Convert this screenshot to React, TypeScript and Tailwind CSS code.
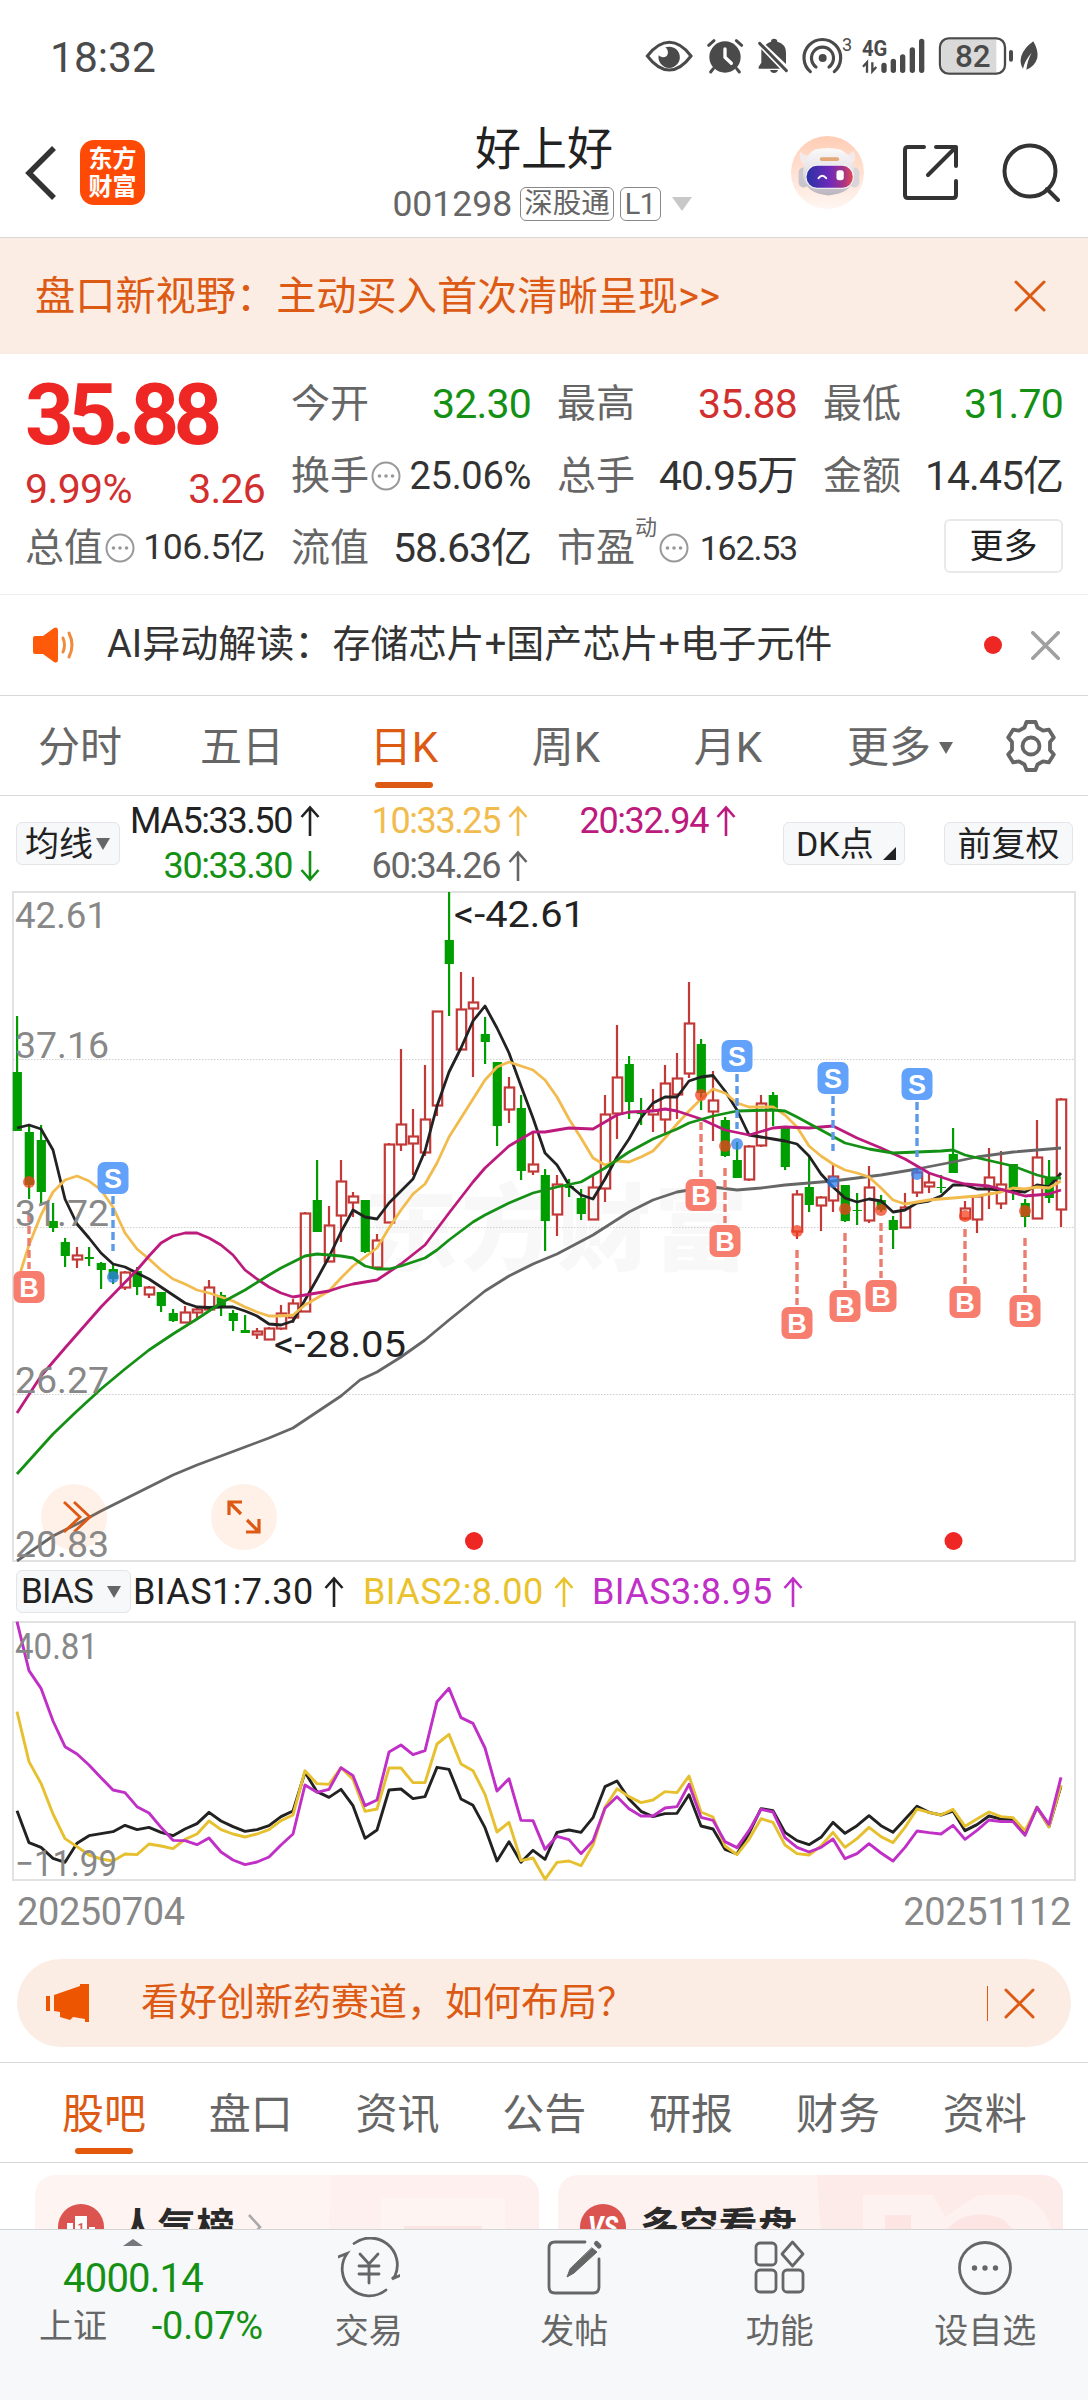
import React, { useState } from 'react';

type Candle = [high: number, top: number, bottom: number, low: number, up: 0 | 1];

const FIRST_X = 17;
const STEP = 12;

const CANDLES: Candle[] = [
  [1016, 1072, 1131, 1131, 0], [1125, 1132, 1185, 1199, 0], [1125, 1140, 1192, 1204, 0], [1203, 1221, 1228, 1232, 0],
  [1238, 1242, 1256, 1267, 0], [1247, 1255, 1259, 1268, 1], [1247, 1257, 1259, 1266, 0], [1262, 1263, 1270, 1289, 0],
  [1265, 1269, 1279, 1284, 0], [1271, 1272, 1287, 1290, 1], [1267, 1271, 1287, 1295, 0], [1286, 1287, 1294, 1298, 1],
  [1292, 1292, 1306, 1312, 0], [1309, 1313, 1321, 1322, 0], [1306, 1312, 1322, 1322, 1], [1308, 1309, 1312, 1319, 1],
  [1280, 1287, 1309, 1310, 1], [1292, 1295, 1306, 1316, 0], [1310, 1313, 1321, 1331, 0], [1315, 1330, 1333, 1333, 0],
  [1328, 1331, 1334, 1339, 1], [1327, 1328, 1339, 1339, 1], [1305, 1313, 1328, 1330, 1], [1299, 1303, 1317, 1323, 1],
  [1212, 1213, 1311, 1311, 1], [1160, 1200, 1232, 1232, 0], [1206, 1225, 1261, 1262, 1], [1160, 1181, 1215, 1242, 1],
  [1192, 1196, 1202, 1217, 1], [1200, 1200, 1252, 1253, 0], [1234, 1240, 1267, 1267, 1], [1143, 1144, 1222, 1222, 1],
  [1049, 1124, 1144, 1151, 1], [1109, 1136, 1143, 1175, 1], [1065, 1119, 1152, 1156, 1], [1011, 1011, 1105, 1116, 1],
  [892, 940, 964, 1016, 0], [972, 1009, 1049, 1049, 1], [977, 1002, 1008, 1077, 1], [1017, 1034, 1042, 1064, 0],
  [1062, 1062, 1126, 1146, 0], [1077, 1087, 1109, 1123, 1], [1095, 1108, 1171, 1180, 0], [1132, 1164, 1171, 1175, 1],
  [1169, 1175, 1221, 1251, 0], [1175, 1184, 1214, 1236, 1], [1179, 1186, 1188, 1197, 0], [1189, 1198, 1214, 1220, 0],
  [1174, 1187, 1219, 1219, 1], [1095, 1114, 1188, 1202, 1], [1025, 1077, 1113, 1139, 1], [1056, 1064, 1102, 1119, 0],
  [1098, 1112, 1114, 1125, 0], [1089, 1110, 1114, 1132, 1], [1065, 1083, 1119, 1133, 1], [1053, 1078, 1094, 1119, 1],
  [982, 1023, 1073, 1078, 1], [1039, 1044, 1093, 1110, 0], [1071, 1100, 1111, 1141, 1], [1117, 1120, 1156, 1157, 0],
  [1142, 1160, 1178, 1178, 0], [1145, 1146, 1179, 1181, 1], [1095, 1103, 1145, 1147, 1], [1092, 1095, 1110, 1126, 0],
  [1127, 1128, 1167, 1170, 0], [1190, 1194, 1231, 1239, 1], [1155, 1187, 1205, 1212, 0], [1196, 1197, 1205, 1231, 1],
  [1164, 1176, 1200, 1212, 1], [1185, 1185, 1221, 1222, 0], [1193, 1210, 1211, 1225, 0], [1166, 1187, 1220, 1223, 1],
  [1195, 1200, 1210, 1212, 0], [1216, 1220, 1230, 1249, 0], [1193, 1207, 1227, 1227, 1], [1169, 1172, 1192, 1197, 1],
  [1173, 1182, 1186, 1193, 1], [1175, 1187, 1188, 1193, 0], [1128, 1154, 1173, 1173, 0], [1201, 1208, 1218, 1220, 1],
  [1195, 1196, 1219, 1233, 1], [1148, 1177, 1188, 1209, 1], [1151, 1184, 1203, 1209, 1], [1164, 1164, 1188, 1200, 0],
  [1199, 1203, 1217, 1227, 0], [1120, 1157, 1218, 1218, 1], [1160, 1178, 1198, 1203, 0], [1098, 1099, 1209, 1227, 1],
];

const MA_LINES = [
  {
    color: '#666666',
    points: '17,1561 53,1536 77,1524 101,1511 125,1499 149,1487 173,1475 197,1465 221,1456 245,1447 269,1438 293,1428 317,1412 341,1396 360,1380 377,1372 401,1357 425,1340 449,1320 485,1291 509,1276 533,1264 557,1254 593,1235 629,1212 653,1200 677,1192 701,1188 713,1187 737,1190 761,1188 785,1185 833,1181 881,1175 917,1169 953,1162 977,1157 1013,1152 1061,1148',
  },
  {
    color: '#222222',
    points: '17,1128 29,1125 41,1129 53,1150 65,1199 77,1224 89,1238 101,1253 113,1264 125,1267 137,1273 149,1279 161,1287 173,1295 185,1303 197,1307 209,1307.5 221,1307 233,1307 245,1311 257,1316 269,1324 281,1325 293,1321 305,1300 317,1279 329,1257 341,1232 353,1210 365,1217 377,1219 389,1203 401,1191 413,1179 425,1151 437,1106 449,1072 461,1048 473,1021 485,1006 497,1028 509,1053 521,1086 533,1118 545,1153 557,1165 569,1185 581,1195 593,1199 605,1179 617,1157 629,1139 641,1118 653,1103 665,1097 677,1097 689,1081 701,1077 713,1075.5 725,1091 737,1110 749,1135 761,1137 773,1139 785,1141 797,1144 809,1156 821,1174 833,1187 845,1198 857,1202 869,1199 881,1201 893,1212 905,1210 917,1203 929,1201 941,1196 953,1185 965,1185 977,1189 989,1189 1001,1190 1013,1191 1025,1192 1037,1185 1049,1187 1061,1173',
  },
  {
    color: '#f2bb4d',
    points: '17,1283 29,1245 41,1215 53,1192 65,1180 77,1176 89,1181 101,1190 113,1207 125,1233 137,1249 149,1259 161,1270 173,1279 185,1284 197,1290 209,1293 221,1297 233,1301 245,1307 257,1312 269,1316 281,1316 293,1315 305,1305 317,1298 329,1291 341,1278 353,1266 365,1257 377,1248 389,1228 401,1210 413,1194 425,1184 437,1163 449,1137 461,1118 473,1099 485,1080 497,1067 509,1062 521,1066 533,1070 545,1080 557,1097 569,1119 581,1138 593,1158 605,1165 617,1161 629,1162 641,1157 653,1151 665,1138 677,1124 689,1111 701,1099 713,1089 725,1093 737,1103 749,1107 761,1107 773,1107 785,1115 797,1127 809,1146 821,1156 833,1164 845,1170 857,1173 869,1177 881,1188 893,1200 905,1204 917,1202 929,1200 941,1199 953,1198 965,1197 977,1196 989,1194 1001,1192 1013,1188 1025,1189 1037,1187 1049,1188 1061,1181',
  },
  {
    color: '#bd1a7d',
    points: '17,1413 41,1376 65,1348 101,1307 137,1270 149,1256 161,1243 173,1236 185,1233 197,1233 209,1238 221,1245 233,1255 245,1270 257,1279 269,1287 281,1293 293,1297 305,1295 329,1291 341,1287 353,1284 365,1282 377,1280 401,1264 425,1245 449,1213 473,1182 485,1168 497,1157 509,1146 521,1139 533,1132 545,1132 569,1128 593,1129 605,1122 617,1115 629,1112 653,1111 665,1109 677,1111 701,1119 725,1130 749,1135 773,1128 785,1127 809,1128 833,1126 857,1138 881,1148 905,1159 929,1173 953,1181 965,1184 989,1186 1025,1196 1049,1194 1061,1190',
  },
  {
    color: '#149114',
    points: '17,1474 53,1434 77,1411 101,1389 125,1369 149,1350 173,1334 197,1319 221,1303 245,1290 269,1275 281,1268 293,1262 305,1256 317,1254 341,1256 353,1258 365,1266 377,1269 389,1269 401,1266 425,1258 437,1250 449,1240 473,1222 485,1215 509,1203 533,1193 557,1187 581,1182 593,1175 605,1168 629,1152 653,1139 677,1129 689,1123 713,1116 737,1111 773,1110 785,1111 797,1117 821,1130 845,1143 869,1149 893,1153 917,1152 941,1151 953,1150 965,1155 1013,1166 1037,1175 1049,1178 1061,1178',
  },
];

const TRADES = [
  { side: 'B', x: 29, tag: 1271, dot: 1182 },
  { side: 'S', x: 113, tag: 1162, dot: 1277 },
  { side: 'B', x: 701, tag: 1179, dot: 1095 },
  { side: 'B', x: 725, tag: 1225, dot: 1146 },
  { side: 'S', x: 737, tag: 1040, dot: 1144 },
  { side: 'B', x: 797, tag: 1307, dot: 1231 },
  { side: 'S', x: 833, tag: 1062, dot: 1182 },
  { side: 'B', x: 845, tag: 1290, dot: 1209 },
  { side: 'B', x: 881, tag: 1280, dot: 1210 },
  { side: 'S', x: 917, tag: 1068, dot: 1174 },
  { side: 'B', x: 965, tag: 1286, dot: 1216 },
  { side: 'B', x: 1025, tag: 1295, dot: 1211 },
];

const BIAS_LINES = [
  {
    color: '#222222',
    values: [632, 728, 742, 775, 787, 730, 707, 701, 695, 676, 689, 682, 697, 707, 687, 671, 637, 663, 680, 694, 689, 677, 650, 633, 517, 575, 592, 568, 617, 715, 690, 570, 567, 596, 590, 502, 508, 597, 616, 683, 783, 725, 787, 751, 778, 697, 690, 697, 653, 560, 543, 597, 634, 650, 641, 640, 584, 678, 687, 748, 762, 700, 626, 632, 697, 722, 734, 712, 667, 700, 677, 647, 677, 697, 658, 619, 637, 645, 633, 692, 674, 648, 657, 659, 700, 622, 680, 558],
  },
  {
    color: '#e6c02f',
    values: [335, 485, 550, 642, 716, 740, 765, 777, 783, 762, 764, 732, 738, 746, 718, 702, 663, 689, 702, 711, 702, 689, 662, 645, 512, 551, 553, 503, 538, 634, 627, 504, 504, 548, 548, 432, 403, 492, 512, 583, 696, 667, 782, 774, 838, 787, 783, 797, 735, 622, 566, 590, 608, 600, 575, 578, 528, 636, 651, 738, 764, 718, 656, 667, 735, 761, 765, 738, 697, 742, 716, 682, 710, 728, 682, 627, 637, 645, 628, 679, 657, 636, 650, 653, 692, 622, 680, 555],
  },
  {
    color: '#c02fc6',
    values: [65, 212, 265, 363, 440, 462, 495, 533, 570, 578, 620, 639, 682, 721, 722, 734, 714, 756, 780, 794, 786, 771, 735, 702, 555, 577, 568, 503, 527, 617, 600, 456, 435, 464, 452, 305, 265, 353, 370, 444, 573, 536, 661, 662, 748, 709, 719, 761, 722, 625, 590, 626, 648, 648, 624, 620, 553, 652, 661, 725, 743, 692, 628, 636, 713, 742, 756, 742, 717, 776, 761, 731, 759, 783, 742, 693, 698, 702, 676, 718, 691, 660, 665, 665, 706, 622, 673, 532],
  },
];

const biasPoints = (values: number[]) =>
  values.map((v, i) => `${FIRST_X + i * STEP},${1600 + v / 3}`).join(' ');

const StatusIcons = () => (
  <svg width="400" height="42" viewBox="40 45 1200 126" fill="#4a4a4a">
    <path d="M50 108Q82 67 116 67Q150 67 181 108Q150 150 116 150Q82 150 50 108Z" fill="none" stroke="#4a4a4a" strokeWidth="9" />
    <path d="M104 82A32 32 0 1 1 84 106A18 18 0 0 0 108 108A18 18 0 0 0 104 82Z" />
    <circle cx="283" cy="111" r="47" />
    <path d="M234 76L250 62M333 76L317 62M248 146L240 156M318 146L326 156" stroke="#4a4a4a" strokeWidth="9" strokeLinecap="round" />
    <path d="M283 87V112L302 130" fill="none" stroke="#fff" strokeWidth="10" strokeLinecap="round" strokeLinejoin="round" />
    <path d="M392 88L448 146H384V140L392 128ZM405 74Q414 66 421 65Q421 56 430 56Q440 56 440 65Q466 72 466 98V132ZM418 150H442Q439 159 430 159Q421 159 418 150Z" />
    <path d="M387 70L467 152" stroke="#4a4a4a" strokeWidth="9" strokeLinecap="round" />
    <g fill="none" stroke="#4a4a4a" strokeWidth="9.5" strokeLinecap="round">
      <path d="M539 155A55 55 0 1 1 611 155" />
      <path d="M556 141A33 33 0 1 1 595 141" />
    </g>
    <circle cx="576" cy="114" r="12" />
    <text x="634" y="94" fontSize="54" className="font-[Roboto]">3</text>
    <text x="694" y="107" fontSize="66" fontWeight="700" textLength="76" lengthAdjust="spacingAndGlyphs" className="font-[Roboto]">4G</text>
    <path d="M697 140L709 127V158M737 141L725 154V127" fill="none" stroke="#4a4a4a" strokeWidth="7" />
    <g stroke="#4a4a4a" strokeWidth="16" strokeLinecap="round">
      <path d="M760 136V151M788 124V151M816 111V151M845 90V151M873 64V151" />
    </g>
    <path d="M950 60H1097V156H950Q934 156 934 140V76Q934 60 950 60Z" fill="#d9d9d9" />
    <rect x="928" y="55" width="195" height="106" rx="26" fill="none" stroke="#4a4a4a" strokeWidth="7" />
    <text x="973" y="142" fontSize="92" fontWeight="500" textLength="107" lengthAdjust="spacingAndGlyphs" className="font-[Roboto]">82</text>
    <rect x="1135" y="90" width="12" height="35" rx="6" />
    <path d="M1208 64Q1180 84 1172 108Q1166 130 1177 146Q1182 122 1203 98Q1190 122 1187 149Q1212 140 1220 114Q1224 92 1208 64Z" />
  </svg>
);

const RobotIcon = () => (
  <svg width="73" height="73" viewBox="480 347 220 220">
    <defs>
      <linearGradient id="robotBg" x1="0" y1="0" x2="0" y2="1">
        <stop offset="0" stopColor="#ffcdb4" />
        <stop offset="1" stopColor="#fff6f2" />
      </linearGradient>
      <linearGradient id="robotFace" x1="0" y1="0" x2="1" y2="0">
        <stop offset="0" stopColor="#2a31a8" />
        <stop offset="0.5" stopColor="#6f2ab8" />
        <stop offset="0.8" stopColor="#a53387" />
        <stop offset="1" stopColor="#e04a55" />
      </linearGradient>
      <linearGradient id="robotHead" x1="0" y1="0" x2="0" y2="1">
        <stop offset="0" stopColor="#fbfafa" />
        <stop offset="0.4" stopColor="#e9e6ea" />
        <stop offset="1" stopColor="#b9b4bd" />
      </linearGradient>
    </defs>
    <circle cx="590" cy="457" r="110" fill="url(#robotBg)" />
    <path d="M508 394Q500 420 520 434L548 404Q520 412 508 394ZM667 390Q682 415 662 432L634 402Q660 408 667 390Z" fill="#f4eaec" />
    <rect x="503" y="442" width="30" height="60" rx="14" fill="#c9c5cd" />
    <rect x="656" y="442" width="30" height="60" rx="14" fill="#d8d4da" />
    <path d="M553 388Q592 378 628 388Q670 406 672 470Q664 520 592 526Q524 520 516 470Q516 406 553 388Z" fill="url(#robotHead)" />
    <rect x="567" y="411" width="58" height="11" rx="5" fill="#e5a878" />
    <rect x="524" y="434" width="145" height="72" rx="34" fill="#f6f4f7" />
    <rect x="527" y="437" width="139" height="66" rx="31" fill="url(#robotFace)" />
    <path d="M563 474Q574 460 586 474" fill="none" stroke="#fff" strokeWidth="6" strokeLinecap="round" />
    <rect x="617" y="450" width="22" height="30" rx="8" fill="#fff" />
  </svg>
);

const Cross = ({ size, color, width = 3 }: { size: number; color: string; width?: number }) => (
  <svg width={size} height={size} viewBox="0 0 32 32" fill="none" stroke={color} strokeWidth={width} strokeLinecap="round" className="shrink-0">
    <path d="M2 2L30 30M30 2L2 30" />
  </svg>
);

const Arrow = ({ down = false }: { down?: boolean }) => (
  <svg width="20" height="32" viewBox="0 0 20 32" fill="none" stroke="currentColor" strokeWidth="2.6" className={down ? 'shrink-0 rotate-180' : 'shrink-0'}>
    <path d="M10 31V2.5M1.5 12L10 2.5L18.5 12" />
  </svg>
);

const Hint = () => (
  <svg width="30" height="30" viewBox="0 0 30 30" fill="#999" className="ml-[2px] shrink-0">
    <circle cx="15" cy="15" r="13.5" fill="none" stroke="#999" strokeWidth="2" />
    <circle cx="8.5" cy="15" r="1.8" />
    <circle cx="15" cy="15" r="1.8" />
    <circle cx="21.5" cy="15" r="1.8" />
  </svg>
);

const Header = () => (
  <header className="flex h-[130px] items-center border-b border-[#d8d8d8] pl-[24px] pr-[28px]">
    <svg width="34" height="54" viewBox="0 0 34 54" fill="none" stroke="#333" strokeWidth="5.5">
      <path d="M30 2L5 27L30 52" />
    </svg>
    <div className="ml-[22px] flex h-[65px] w-[65px] flex-col items-center justify-center rounded-[14px] bg-[#ff4a05] text-[24px] font-bold leading-[28px] text-white">
      <span>东方</span>
      <span>财富</span>
    </div>
    <div className="ml-[146px] flex w-[506px] flex-col items-center">
      <h1 className="text-[46px] leading-[50px] text-[#222]">好上好</h1>
      <div className="mr-[3px] mt-[13px] flex items-center gap-[6px] text-[#666]">
        <span className="mr-[2px] text-[35.5px] leading-[35px]">001298</span>
        <span className="flex h-[34px] items-center rounded-[6px] border border-[#888] px-[3px] text-[28.5px] leading-none">深股通</span>
        <span className="flex h-[34px] items-center rounded-[6px] border border-[#888] px-[4px] text-[29px] leading-none tracking-[-0.5px]">L1</span>
        <svg width="22" height="14" viewBox="0 0 22 14" fill="#c8c8c8" className="ml-[4px]"><path d="M1 0H21L11 14Z" /></svg>
      </div>
    </div>
    <div className="-ml-[6px] flex items-center">
      <RobotIcon />
      <svg width="57" height="57" viewBox="0 0 57 57" fill="none" stroke="#333" strokeWidth="4" strokeLinecap="round" strokeLinejoin="round" className="ml-[38px]">
        <path d="M22 3H6Q3 3 3 6V51Q3 54 6 54H51Q54 54 54 51V37M34 3H54V22M54 3L26 31" />
      </svg>
      <svg width="58" height="59" viewBox="0 0 58 59" fill="none" stroke="#333" strokeWidth="4" strokeLinecap="round" className="ml-[43px]">
        <circle cx="28" cy="28" r="25.5" />
        <path d="M45 46L56 57" />
      </svg>
    </div>
  </header>
);

const labelClasses = 'text-[39px] leading-none text-[#666]';

const Metric = ({ label, value, hint, sup, valueClass = 'text-[#333] text-[41px] tracking-[-1px]' }: {
  label: string;
  value: string;
  hint?: boolean;
  sup?: string;
  valueClass?: string;
}) => (
  <div className="flex h-[72px] items-center justify-between whitespace-nowrap leading-none">
    <span className={`flex items-center ${labelClasses}`}>
      {label}
      {sup && <sup className="-top-[20px] text-[22px] leading-none">{sup}</sup>}
      {hint && <Hint />}
    </span>
    <span className={`leading-none ${valueClass}`}>{value}</span>
  </div>
);

const QuotePanel = () => (
  <section className="grid h-[241px] grid-cols-[240px_240px_240px_240px] gap-x-[26px] border-b border-[#ececec] pl-[25px] pt-[14px]">
    <div>
      <div className="pt-[3px] text-[85px] font-bold leading-[89px] tracking-[-5.6px] text-[#ee2624]">35.88</div>
      <div className="flex h-[58px] items-center justify-between text-[41px] leading-none text-[#d22f2f]">
        <span className="tracking-[-0.6px]">9.99%</span>
        <span className="tracking-[-0.8px]">3.26</span>
      </div>
      <div className="-mt-[6px]">
        <Metric label="总值" value="106.5亿" hint valueClass="text-[#333] text-[35.5px] tracking-[-0.5px]" />
      </div>
    </div>
    <div>
      <Metric label="今开" value="32.30" valueClass="text-[#149114] text-[41px] tracking-[-0.8px]" />
      <Metric label="换手" value="25.06%" hint valueClass="text-[#333] text-[38px] tracking-[-0.3px]" />
      <Metric label="流值" value="58.63亿" />
    </div>
    <div>
      <Metric label="最高" value="35.88" valueClass="text-[#d22f2f] text-[41px] tracking-[-0.8px]" />
      <Metric label="总手" value="40.95万" />
      <Metric label="市盈" value="162.53" sup="动" hint valueClass="text-[#333] text-[34px] tracking-[-1.2px]" />
    </div>
    <div>
      <Metric label="最低" value="31.70" valueClass="text-[#149114] text-[41px] tracking-[-0.8px]" />
      <Metric label="金额" value="14.45亿" />
      <div className="flex h-[68px] items-center justify-end">
        <button className="flex h-[54px] w-[119px] items-center justify-center rounded-[6px] border-2 border-[#e9e9e9] text-[34px] leading-none text-[#222]">更多</button>
      </div>
    </div>
  </section>
);

const NoticeRow = () => (
  <section className="flex h-[101px] items-center border-b border-[#d8d8d8] pl-[33px] pr-[28px]">
    <svg width="44" height="36" viewBox="0 0 44 36">
      <path d="M2 9H10L21 1Q25 -1 25 4V32Q25 37 21 35L10 27H2Q0 27 0 25V11Q0 9 2 9Z" fill="#ff5a0a" />
      <path d="M30 11Q33 18 30 25M36 6Q42 18 36 30" fill="none" stroke="#f08a3c" strokeWidth="3" strokeLinecap="round" />
    </svg>
    <p className="ml-[30px] whitespace-nowrap pb-[2px] text-[38px] leading-none tracking-[0.05px] text-[#333]">AI异动解读：存储芯片+国产芯片+电子元件</p>
    <span className="ml-auto mr-[29px] h-[18px] w-[18px] rounded-full bg-[#ee2624]" />
    <Cross size={29} color="#a0a0a0" width={4} />
  </section>
);

const PERIODS = ['分时', '五日', '日K', '周K', '月K'];

const PeriodTabs = () => {
  const [active, setActive] = useState('日K');

  return (
    <nav className="flex h-[100px] items-center border-b border-[#d8d8d8] text-[42px] leading-none text-[#666]">
      {PERIODS.map((period) => (
        <button
          key={period}
          onClick={() => setActive(period)}
          className={`relative flex h-full w-[162px] items-center justify-center pr-[2px] pt-[4px] ${active === period ? 'text-[#dc5a14]' : ''}`}
        >
          {period}
          {active === period && <span className="absolute bottom-[7px] h-[6px] w-[58px] rounded-full bg-[#dc5a14]" />}
        </button>
      ))}
      <button className="ml-[37px] flex items-center gap-[8px] pt-[4px]">
        更多
        <svg width="14" height="12" viewBox="0 0 14 12" fill="#666"><path d="M0 0H14L7 12Z" /></svg>
      </button>
      <svg width="52" height="52" viewBox="0 0 52 52" fill="none" stroke="#666" strokeWidth="3.8" strokeLinejoin="round" className="ml-[52px]">
        <path d="M19.5 7.5L21.5 2H30.5L32.5 7.5L38 10.7L43.8 9.6L48.8 17.5L45 22V30L48.8 34.5L43.8 42.4L38 41.3L32.5 44.5L30.5 50H21.5L19.5 44.5L14 41.3L8.2 42.4L3.2 34.5L7 30V22L3.2 17.5L8.2 9.6L14 10.7Z" />
        <circle cx="26" cy="26" r="8.5" />
      </svg>
    </nav>
  );
};

const chipClasses = 'flex h-[43px] items-center rounded-[6px] border border-[#e3e5e8] bg-[#f6f8fa] text-[34px] leading-none text-[#222]';

const AverageRow = () => (
  <section className="flex h-[95px] items-center pl-[16px] pr-[15px] text-[36px] leading-none">
    <button className={`${chipClasses} w-[104px] pl-[8px]`}>
      均线
      <svg width="14" height="12" viewBox="0 0 14 12" fill="#666" className="ml-[3px]"><path d="M0 0H14L7 12Z" /></svg>
    </button>
    <div className="ml-[8px] grid grid-cols-[192px_154px_154px] grid-rows-[45px_45px] gap-x-[54px] [&>span]:flex [&>span]:items-center [&>span]:justify-end [&>span]:gap-[8px] [&>span]:whitespace-nowrap [&>span]:tracking-[-1.4px]">
      <span className="text-[#222]">MA5:33.50<Arrow /></span>
      <span className="text-[#f2bb4d]">10:33.25<Arrow /></span>
      <span className="text-[#bd1a7d]">20:32.94<Arrow /></span>
      <span className="text-[#149114]">30:33.30<Arrow down /></span>
      <span className="text-[#666]">60:34.26<Arrow /></span>
    </div>
    <button className={`${chipClasses} ml-auto w-[122px] shrink-0 pl-[12px]`}>
      DK点
      <svg width="13" height="13" viewBox="0 0 13 13" fill="#222" className="mb-[4px] ml-[9px] self-end"><path d="M13 0V13H0Z" /></svg>
    </button>
    <button className={`${chipClasses} ml-[39px] w-[129px] shrink-0 justify-center`}>前复权</button>
  </section>
);

const axisText = 'fill-[#888] font-[Roboto] text-[36px]';

const KLineChart = () => (
  <svg width="1088" height="671" viewBox="0 891 1088 671" className="block font-['Roboto','Noto_Sans_CJK_SC',sans-serif]">
    <text x="364" y="1263" fontSize="94" fontWeight="900" textLength="384" fill="#f8f8f8">东方财富</text>
    <rect x="13" y="892" width="1062" height="669" fill="none" stroke="#e2e2e2" strokeWidth="2" />
    {[1059.5, 1227.5, 1394.5].map((y) => (
      <line key={y} x1="13" x2="1075" y1={y} y2={y} stroke="#cfcfcf" strokeWidth="1" strokeDasharray="1.5 1.5" />
    ))}
    {CANDLES.map(([high, top, bottom, low, up], i) => {
      const x = FIRST_X + i * STEP;
      const height = Math.max(bottom - top, 1);
      return up ? (
        <g key={i} fill="none" stroke="#c23a37" strokeWidth="2.2">
          <path d={`M${x} ${high}V${top}M${x} ${bottom}V${low}`} />
          <rect x={x - 4.2} y={top + 0.5} width="9.4" height={height} />
        </g>
      ) : (
        <g key={i} fill="#009e00">
          <rect x={x - 1} y={high} width="2.2" height={low - high} />
          <rect x={x - 4.3} y={top} width="9.2" height={height} />
        </g>
      );
    })}
    {MA_LINES.map((line) => (
      <polyline key={line.color} points={line.points} fill="none" stroke={line.color} strokeWidth="2.8" strokeLinejoin="round" />
    ))}
    {TRADES.map(({ side, x, tag, dot }) => {
      const buy = side === 'B';
      const color = buy ? '#f77e6e' : '#62a2fb';
      const dashY = buy ? tag - 57 : tag + 34;
      return (
        <g key={x}>
          <line x1={x} x2={x} y1={dashY} y2={dashY + 55} stroke={buy ? '#ea7d6e' : '#5a9ae8'} strokeWidth="3.4" strokeDasharray="8 4" />
          <circle cx={x} cy={dot} r="6" fill={buy ? '#f2401f' : '#2f7fec'} opacity="0.75" />
          <rect x={x - 15.5} y={tag} width="31" height="32" rx="7" fill={color} />
          <text x={x} y={tag + 25.5} textAnchor="middle" fontSize="27" fontWeight="700" fill="#fff" className="font-['Liberation_Sans']">{side}</text>
        </g>
      );
    })}
    <circle cx="74" cy="1517" r="33" fill="#ff6a1a" opacity="0.1" />
    <circle cx="244" cy="1517" r="33" fill="#ff6a1a" opacity="0.1" />
    <g fill="none" stroke="#dc5a14" strokeWidth="2.8">
      <path d="M64 1502L80 1517L64 1532M74 1502L90 1517L74 1532" />
      <path d="M229 1515V1502H242M230 1503L241 1514M259 1519V1532H246M258 1531L247 1520" strokeWidth="3.2" />
    </g>
    <circle cx="474" cy="1541" r="9" fill="#ee2624" />
    <circle cx="953.5" cy="1541" r="9" fill="#ee2624" />
    <text x="15" y="928" textLength="92" lengthAdjust="spacingAndGlyphs" className={axisText}>42.61</text>
    <text x="15" y="1058" textLength="94" lengthAdjust="spacingAndGlyphs" className={axisText}>37.16</text>
    <text x="15" y="1226" textLength="94" lengthAdjust="spacingAndGlyphs" className={axisText}>31.72</text>
    <text x="15" y="1393" textLength="94" lengthAdjust="spacingAndGlyphs" className={axisText}>26.27</text>
    <text x="15" y="1557" textLength="94" lengthAdjust="spacingAndGlyphs" className={axisText}>20.83</text>
    <text x="454" y="926.5" textLength="131" lengthAdjust="spacingAndGlyphs" className="fill-[#222] text-[37px]">&lt;-42.61</text>
    <text x="274" y="1356.5" textLength="132" lengthAdjust="spacingAndGlyphs" className="fill-[#222] text-[37px]">&lt;-28.05</text>
  </svg>
);

const BiasRow = () => (
  <section className="flex h-[59px] items-center pl-[16px] text-[36px] leading-none tracking-[0.4px]">
    <button className={`${chipClasses} w-[115px] pl-[4px]`}>
      <span className="text-[35px] leading-none tracking-[-0.8px]">BIAS</span>
      <svg width="14" height="12" viewBox="0 0 14 12" fill="#666" className="ml-[14px]"><path d="M0 0H14L7 12Z" /></svg>
    </button>
    <span className="ml-[2px] flex w-[230px] items-center gap-[10px] text-[#222]">BIAS1:7.30<Arrow /></span>
    <span className="flex w-[229px] items-center gap-[10px] text-[#e9c22c]">BIAS2:8.00<Arrow /></span>
    <span className="flex items-center gap-[10px] text-[#c02fc6]">BIAS3:8.95<Arrow /></span>
  </section>
);

const BiasChart = () => (
  <svg width="1088" height="260" viewBox="0 1621 1088 260" className="block">
    <rect x="13" y="1622" width="1062" height="258" fill="none" stroke="#e2e2e2" strokeWidth="2" />
    {BIAS_LINES.map((line) => (
      <polyline key={line.color} points={biasPoints(line.values)} fill="none" stroke={line.color} strokeWidth="2.9" strokeLinejoin="round" />
    ))}
    <text x="15" y="1659" textLength="83" lengthAdjust="spacingAndGlyphs" className={axisText}>40.81</text>
    <text x="15" y="1876" textLength="102" lengthAdjust="spacingAndGlyphs" className={axisText}>−11.99</text>
  </svg>
);

const Promo = () => (
  <section className="mx-[17px] flex h-[88px] items-center rounded-full bg-[#fcede4] pl-[29px] pr-[36px] text-[#dc5a14]">
    <svg width="44" height="38" viewBox="0 0 44 38" fill="#ee5500">
      <path d="M0 12H4V27H0ZM8 11L34 2V0H43V38H39V35L27 33L24 36L14 33V28L8 27Z" />
    </svg>
    <p className="ml-[51px] whitespace-nowrap pb-[2px] text-[38px] leading-none">看好创新药赛道，如何布局？</p>
    <span className="ml-auto mr-[16px] h-[35px] w-px bg-[#dc5a14]" />
    <Cross size={31} color="#dc5a14" />
  </section>
);

const SECTIONS = ['股吧', '盘口', '资讯', '公告', '研报', '财务', '资料'];

const SectionTabs = () => {
  const [active, setActive] = useState('股吧');

  return (
    <nav className="flex h-[101px] border-y border-[#d8d8d8] pl-[30.5px] text-[42px] leading-none text-[#666]">
      {SECTIONS.map((name) => (
        <button
          key={name}
          onClick={() => setActive(name)}
          className={`relative flex h-full w-[146.8px] items-center justify-center ${active === name ? 'text-[#dc5a14]' : ''}`}
        >
          <span className="mt-[5px]">{name}</span>
          {active === name && <span className="absolute bottom-[8px] h-[6px] w-[58px] rounded-full bg-[#e35909]" />}
        </button>
      ))}
    </nav>
  );
};

const Cards = () => (
  <section className="flex h-[66px] gap-[19px] overflow-hidden pl-[35px] pt-[12px]">
    <div className="relative flex h-[120px] w-[504px] overflow-hidden rounded-[20px] bg-[#fef4f2] pl-[23px] pt-[29px]">
      <svg width="230" height="120" className="absolute right-0 top-0">
        <path d="M22 0H230V120H-20V62H20Z" fill="#fdf0ee" />
        <path d="M72 23H196V120H72Z" fill="#fef5f3" />
        <rect x="95" y="51" width="78" height="20" fill="#fbe5e3" />
      </svg>
      <svg width="46" height="46" viewBox="0 0 46 46" className="relative">
        <circle cx="23" cy="23" r="23" fill="#dc5450" />
        <path d="M9 19H15V36H9ZM17 12H29V36H17ZM31 23H37V36H31Z" fill="#fff" />
        <text x="23" y="28" textAnchor="middle" fontSize="12" fontWeight="700" fill="#dc5450">1</text>
      </svg>
      <span className="relative ml-[15px] text-[38px] font-bold leading-[46px] tracking-[0.8px] text-[#2a2a2a]">人气榜</span>
      <svg width="14" height="26" viewBox="0 0 14 26" fill="none" stroke="#aaa" strokeWidth="2.6" className="relative ml-[13px] mt-[10px]"><path d="M1 1L12 13L1 25" /></svg>
    </div>
    <div className="relative flex h-[120px] w-[505px] overflow-hidden rounded-[20px] bg-[#fef2f0] pl-[22px] pt-[29px]">
      <svg width="250" height="120" className="absolute right-0 top-0">
        <path d="M4 0H250V120H12Z" fill="#fdebe9" />
        <path d="M50 20H120L132 42L165 20H205Q232 26 240 60V120H50Z" fill="#fef2f0" />
        <path d="M72 40H98V120H72ZM130 60Q150 30 190 44L214 70H130Z" fill="#fce5e3" />
      </svg>
      <svg width="46" height="46" viewBox="0 0 46 46" className="relative">
        <circle cx="23" cy="23" r="23" fill="#dc5450" />
        <text x="23" y="33" textAnchor="middle" fontSize="29" fontWeight="800" fontStyle="italic" textLength="30" lengthAdjust="spacingAndGlyphs" fill="#fff">VS</text>
      </svg>
      <span className="relative ml-[14px] text-[39px] font-bold leading-[46px] tracking-[0.3px] text-[#2a2a2a]">多空看盘</span>
    </div>
  </section>
);

const NAV_ITEMS = [
  {
    label: '交易',
    icon: (
      <>
        <path d="M16 6.5A27 27 0 0 1 57 39L54 42L62 38.5M48 53A27 27 0 0 1 9 16.5L0 20" />
        <path d="M22 17L31 27L40 17M31 27V46M21 29H41M21 37H41" />
      </>
    ),
  },
  {
    label: '发帖',
    icon: (
      <>
        <path d="M42 5H12Q6 5 6 11V50Q6 56 12 56H50Q56 56 56 50V22" />
        <path d="M49 11L54 15L31 36L24 40L27 32Z" fill="#666" strokeWidth="1" />
        <path d="M53.5 6.5L56 9" strokeWidth="5" />
      </>
    ),
  },
  {
    label: '功能',
    icon: (
      <>
        <rect x="7" y="6" width="20" height="22" rx="4" />
        <rect x="7" y="33" width="20" height="22" rx="4" />
        <rect x="34" y="33" width="20" height="22" rx="4" />
        <path d="M43.5 5L54 17L43.5 29L33 17Z" strokeLinejoin="round" />
      </>
    ),
  },
  {
    label: '设自选',
    icon: (
      <>
        <circle cx="31" cy="31" r="25.5" />
        <g fill="#666" stroke="none">
          <circle cx="20.5" cy="31" r="2.7" />
          <circle cx="31" cy="31" r="2.7" />
          <circle cx="41.5" cy="31" r="2.7" />
        </g>
      </>
    ),
  },
];

const BottomBar = () => (
  <footer className="flex h-[171px] border-t border-[#d2d4d6] bg-[#f6f8fa] leading-none text-[#666]">
    <div className="flex w-[266px] flex-col items-center pt-[9px]">
      <svg width="20" height="7" viewBox="0 0 20 7" fill="#77777d"><path d="M10 0L20 7H0Z" /></svg>
      <span className="mt-[12px] text-[40px] leading-[42px] tracking-[-0.8px] text-[#149114]">4000.14</span>
      <div className="mt-[6px] flex w-[266px] items-center justify-between pl-[39px] pr-[3px]">
        <span className="text-[34px] leading-[40px]">上证</span>
        <span className="text-[38px] leading-[40px] tracking-[-0.2px] text-[#149114]">-0.07%</span>
      </div>
    </div>
    <div className="flex">
      {NAV_ITEMS.map((item) => (
        <button key={item.label} className="flex w-[205.5px] flex-col items-center pt-[7px]">
          <svg width="62" height="62" viewBox="0 0 62 62" fill="none" stroke="#666" strokeWidth="2.8" strokeLinecap="round">
            {item.icon}
          </svg>
          <span className="mt-[15px] text-[34px] leading-none">{item.label}</span>
        </button>
      ))}
    </div>
  </footer>
);

export default function App() {
  return (
    <div className="h-[2400px] w-[1088px] overflow-hidden bg-white font-['Roboto','Noto_Sans_CJK_SC',sans-serif]">
      <div className="flex h-[108px] justify-between pl-[50px] pr-[44px] pt-[35px] text-[#4a4a4a]">
        <span className="text-[42.5px] leading-[46px]">18:32</span>
        <StatusIcons />
      </div>
      <Header />
      <section className="flex h-[116px] items-center justify-between bg-[#fcede4] pl-[35px] pr-[42px] text-[#dc5a14]">
        <p className="pt-[2px] text-[40.2px] leading-none">盘口新视野：主动买入首次清晰呈现&gt;&gt;</p>
        <Cross size={32} color="#dc5a14" />
      </section>
      <QuotePanel />
      <NoticeRow />
      <PeriodTabs />
      <AverageRow />
      <KLineChart />
      <BiasRow />
      <BiasChart />
      <div className="flex h-[78px] justify-between px-[17px] pt-[11px] text-[38px] leading-[40px] tracking-[-0.4px] text-[#888]">
        <span>20250704</span>
        <span>20251112</span>
      </div>
      <Promo />
      <div className="h-[15px]" />
      <SectionTabs />
      <Cards />
      <BottomBar />
    </div>
  );
}
